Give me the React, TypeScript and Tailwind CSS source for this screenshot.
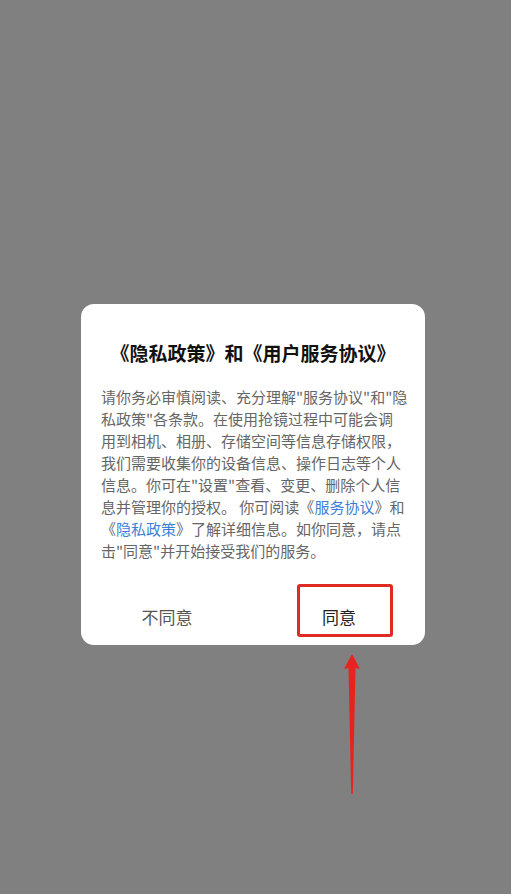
import React from 'react'

const lines: React.ReactNode[] = [
  '请你务必审慎阅读、充分理解"服务协议"和"隐',
  '私政策"各条款。在使用抢镜过程中可能会调',
  '用到相机、相册、存储空间等信息存储权限，',
  '我们需要收集你的设备信息、操作日志等个人',
  '信息。你可在"设置"查看、变更、删除个人信',
  <>
    息并管理你的授权。 你可阅读《<span className="text-[#3d7fd8]">服务协议</span>》和
  </>,
  <>
    《<span className="text-[#3d7fd8]">隐私政策</span>》了解详细信息。如你同意，请点
  </>,
  '击"同意"并开始接受我们的服务。',
]

function Arrow() {
  return (
    <svg width="20" height="142" viewBox="0 0 20 142">
      <path d="M10 0 L18 15 L13.5 14 L10.8 140 L9.2 140 L6.5 14 L2 15 Z" fill="#e8231f" />
    </svg>
  )
}

export default function App() {
  return (
    <div
      className="min-h-[894px] w-full bg-[#808080] pt-[304px]"
      style={{ fontFamily: '"Noto Sans CJK SC", "Noto Sans", sans-serif' }}
    >
      <div className="relative ml-[81px] w-[344px] rounded-[13px] bg-white">
        <h2 className="pt-[36px] text-center text-[19px] font-bold leading-[26px] text-[#111]">
          《隐私政策》和《用户服务协议》
        </h2>
        <div className="mt-[20px] px-[20px] text-[15px] leading-[22px] text-[#666]">
          {lines.map((l, i) => (
            <div key={i} className="whitespace-nowrap">
              {l}
            </div>
          ))}
        </div>
        <div className="mt-[27px] grid h-[56px] grid-cols-2">
          <button className="text-[17px] text-[#555]">不同意</button>
          <button className="text-[17px] text-[#222]">同意</button>
        </div>
        <div className="absolute left-[216px] top-[280px] h-[53px] w-[96px] rounded-[3px] border-[3px] border-[#e02a24]" />
      </div>
      <div className="ml-[342px] mt-[9px]">
        <Arrow />
      </div>
    </div>
  )
}
